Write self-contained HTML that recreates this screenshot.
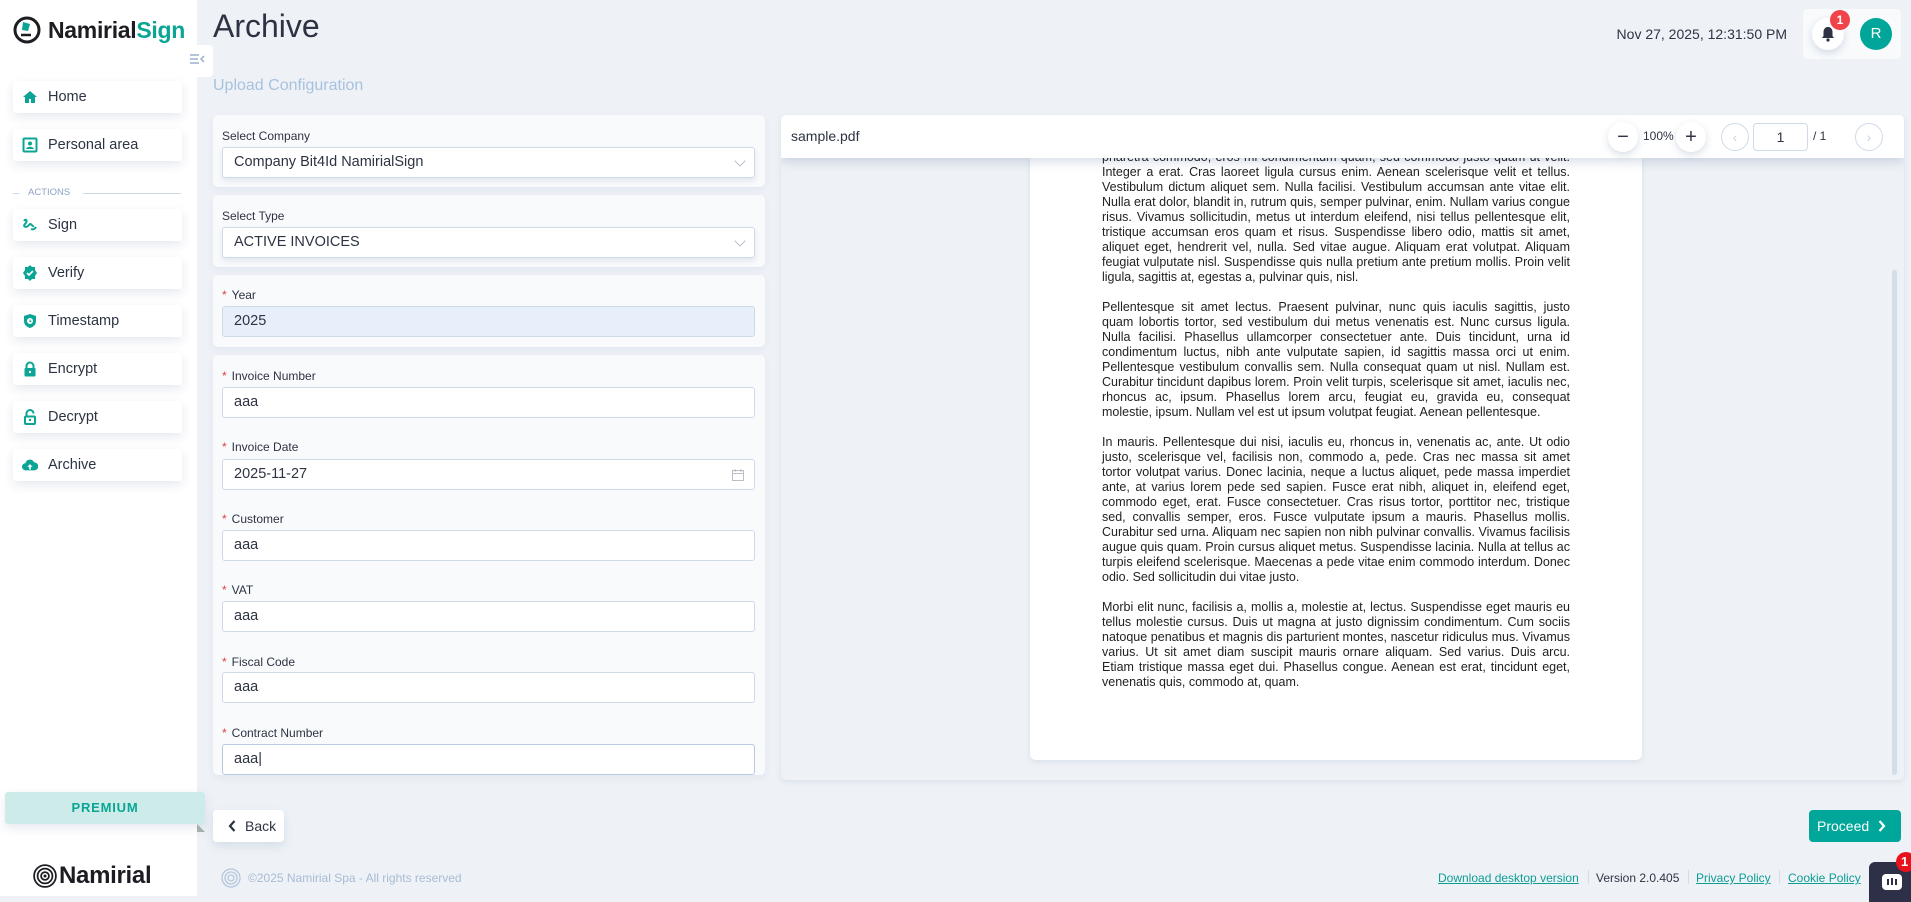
<!DOCTYPE html>
<html><head><meta charset="utf-8">
<style>
*{box-sizing:border-box;margin:0;padding:0}
body{width:1911px;height:896px;overflow:hidden;background:#eef2f7;font-family:"Liberation Sans",Arial,sans-serif;color:#2d3342;position:relative}
.abs{position:absolute}
#side{left:0;top:0;width:197px;height:896px;background:#fff}
.nav{position:absolute;left:13px;width:169px;height:32px;background:#fff;border-radius:3px;box-shadow:0 4px 10px rgba(40,70,120,.12);font-size:14.5px;display:flex;align-items:center;padding-left:9px;color:#2d3342}
.nav svg{width:16px;height:16px;margin-right:10px;flex:none}
.card{position:absolute;left:213px;width:552px;background:#f8fafc;border-radius:5px;box-shadow:0 3px 8px rgba(40,70,120,.06)}
.lbl{position:absolute;left:222px;font-size:12px;color:#2d3342}
.lbl i{color:#e53e3e;font-style:normal;margin-right:5px}
.inp{position:absolute;left:222px;width:533px;height:31px;background:#fff;border:1px solid #cfd9e8;border-radius:3px;font-size:14.5px;padding-left:11px;line-height:29px;color:#2d3342}
.chev{position:absolute;right:10px;top:9px;width:8px;height:8px;border-right:1px solid #b8bec8;border-bottom:1px solid #b8bec8;transform:rotate(45deg)}
.pdft{position:absolute;left:0;top:-8px;width:468px;font-size:12.5px;line-height:15px;text-align:justify;color:#222}
.pdft p{margin-bottom:15px}
.circ{position:absolute;width:30px;height:30px;border-radius:50%;background:#fff;box-shadow:0 3px 8px rgba(40,70,120,.18);display:flex;align-items:center;justify-content:center;font-size:20px;color:#2d3342}
.oc{position:absolute;width:28px;height:28px;border-radius:50%;border:1px solid #cfdbea;color:#c9d3df;font-size:14px;display:flex;align-items:center;justify-content:center}
.fl{position:absolute;top:871px;font-size:12px;color:#0d9d93;text-decoration:underline}
</style></head><body>

<div id="side" class="abs">
  <svg class="abs" style="left:13px;top:15px" width="28" height="30" viewBox="0 0 28 30"><circle cx="14" cy="15" r="12" fill="none" stroke="#1c1c22" stroke-width="3"/><path d="M10 7l7 2-2 7-6-1z" fill="#0aa595"/><path d="M8 20h10" stroke="#1c1c22" stroke-width="2.5"/></svg>
  <div class="abs" style="left:48px;top:17px;font-size:23px;font-weight:bold;letter-spacing:-.3px;color:#1c1c22">Namirial<span style="color:#0aa595">Sign</span></div>
  <div class="nav" style="top:81px"><svg viewBox="0 0 16 16"><path d="M8 2L1 8h2v6h4v-4h2v4h4V8h2z" fill="#0aa595"/></svg>Home</div>
  <div class="nav" style="top:129px"><svg viewBox="0 0 16 16"><rect x="1.5" y="1.5" width="13" height="13" rx="1" fill="none" stroke="#0aa595" stroke-width="2"/><circle cx="8" cy="6.5" r="2" fill="#0aa595"/><path d="M4 12c1-3 7-3 8 0z" fill="#0aa595"/></svg>Personal area</div>
  <div class="abs" style="left:13px;top:193px;width:6px;border-top:1px solid #cdd6e4"></div>
  <div class="abs" style="left:28px;top:187px;font-size:9.5px;color:#8ca3c4">ACTIONS</div>
  <div class="abs" style="left:83px;top:193px;width:98px;border-top:1px solid #cdd6e4"></div>
  <div class="nav" style="top:209px"><svg viewBox="0 0 16 16"><path d="M2 4c2-3 4 0 1 3s2 4 4 1 3 2 5 1M9 12c2 1 4 0 5-2" fill="none" stroke="#0aa595" stroke-width="2"/></svg>Sign</div>
  <div class="nav" style="top:257px"><svg viewBox="0 0 16 16"><path d="M8 0l2 2 3 0 0 3 2 3-2 3v3h-3l-2 2-2-2H3v-3L1 8l2-3V2h3z" fill="#0aa595"/><path d="M5 8l2 2 4-4" fill="none" stroke="#fff" stroke-width="1.6"/></svg>Verify</div>
  <div class="nav" style="top:305px"><svg viewBox="0 0 16 16"><path d="M8 1l6 2v5c0 4-3 6-6 7-3-1-6-3-6-7V3z" fill="#0aa595"/><circle cx="8" cy="8" r="3" fill="#fff"/><path d="M8 6.5v2h1.3" stroke="#0aa595" stroke-width="1" fill="none"/></svg>Timestamp</div>
  <div class="nav" style="top:353px"><svg viewBox="0 0 16 16"><path d="M4.5 7V5a3.5 3.5 0 017 0v2" fill="none" stroke="#0aa595" stroke-width="2"/><rect x="2.5" y="7" width="11" height="8.5" rx="1" fill="#0aa595"/><circle cx="8" cy="11" r="1.2" fill="#fff"/></svg>Encrypt</div>
  <div class="nav" style="top:401px"><svg viewBox="0 0 16 16"><path d="M4.5 7V4.5a3.5 3.5 0 017 0" fill="none" stroke="#0aa595" stroke-width="2"/><rect x="3" y="7.5" width="10" height="7.5" rx="1" fill="none" stroke="#0aa595" stroke-width="2"/><circle cx="8" cy="11" r="1.2" fill="#0aa595"/></svg>Decrypt</div>
  <div class="nav" style="top:449px"><svg viewBox="0 0 18 16"><path d="M4 14a4 4 0 010-8 5 5 0 019.5-1A4 4 0 0114 14z" fill="#0aa595"/><path d="M9 7l-3 3h2v3h2v-3h2z" fill="#fff"/></svg>Archive</div>
  <div class="abs" style="left:5px;top:792px;width:200px;height:32px;background:#cdece9;border-radius:3px;box-shadow:0 4px 10px rgba(40,70,120,.12);text-align:center;line-height:32px;font-size:13px;font-weight:bold;letter-spacing:.8px;color:#0aa595">PREMIUM</div>
  <div class="abs" style="left:197px;top:824px;width:0;height:0;border-left:8px solid #9fb0ad;border-bottom:8px solid transparent;transform:rotate(270deg)"></div>
  <svg class="abs" style="left:33px;top:864px" width="24" height="24" viewBox="0 0 22 22"><g fill="none" stroke="#1c1c22" stroke-width="1.6"><circle cx="11" cy="11" r="10"/><circle cx="11" cy="11" r="6.8"/><circle cx="11" cy="11" r="3.6"/></g><circle cx="11" cy="11" r="1.4" fill="#1c1c22"/></svg>
  <div class="abs" style="left:59px;top:862px;font-size:24px;font-weight:bold;color:#1c1c22;letter-spacing:-.3px">Namirial</div>
</div>
<div class="abs" style="left:190px;top:45px;width:23px;height:32px;background:#fff;border-radius:0 4px 4px 0"></div>
<svg class="abs" style="left:190px;top:54px" width="15" height="12" viewBox="0 0 15 12"><path d="M0 1h9M0 5h8M0 9h9M14 2l-3 3 3 3" fill="none" stroke="#9ab0cf" stroke-width="1.5"/></svg>

<div class="abs" style="left:213px;top:8px;font-size:32px;color:#2d3342">Archive</div>
<div class="abs" style="left:213px;top:77px;font-size:16px;color:#a8c1de">Upload Configuration</div>

<div class="abs" style="right:124px;top:26px;font-size:14px;color:#2d3342">Nov 27, 2025, 12:31:50 PM</div>
<div class="abs" style="left:1803px;top:9px;width:98px;height:50px;background:#f8fafc;border-radius:4px"></div>
<div class="circ" style="left:1812px;top:18px;width:32px;height:32px"><svg width="14" height="16" viewBox="0 0 14 16"><path d="M7 1c-3 0-4.5 2.5-4.5 5v4L1 12h12l-1.5-2V6C11.5 3.5 10 1 7 1z" fill="#2d3342"/><circle cx="7" cy="14" r="1.6" fill="#2d3342"/></svg></div>
<div class="abs" style="left:1830px;top:10px;width:20px;height:20px;border-radius:50%;background:#f0434a;color:#fff;font-size:12px;font-weight:bold;text-align:center;line-height:20px">1</div>
<div class="abs" style="left:1860px;top:18px;width:32px;height:32px;border-radius:50%;background:#00a699;color:#fff;font-size:15px;text-align:center;line-height:32px">R</div>

<div class="card" style="top:115px;height:72px"></div>
<div class="lbl" style="top:129px">Select Company</div>
<div class="inp" style="top:147px;box-shadow:0 3px 6px rgba(40,70,120,.1)">Company Bit4Id NamirialSign<div class="chev"></div></div>
<div class="card" style="top:195px;height:72px"></div>
<div class="lbl" style="top:209px">Select Type</div>
<div class="inp" style="top:227px;box-shadow:0 3px 6px rgba(40,70,120,.1)">ACTIVE INVOICES<div class="chev"></div></div>
<div class="card" style="top:275px;height:72px"></div>
<div class="lbl" style="top:288px"><i>*</i>Year</div>
<div class="inp" style="top:306px;background:#e7effb">2025</div>
<div class="card" style="top:355px;height:420px"></div>
<div class="lbl" style="top:369px"><i>*</i>Invoice Number</div>
<div class="inp" style="top:387px">aaa</div>
<div class="lbl" style="top:440px"><i>*</i>Invoice Date</div>
<div class="inp" style="top:459px">2025-11-27<svg class="abs" style="right:10px;top:9px" width="12" height="12" viewBox="0 0 12 12"><rect x=".5" y="1.5" width="11" height="10" fill="none" stroke="#b8bec8"/><path d="M.5 4.5h11M3 0v3M9 0v3" stroke="#b8bec8"/></svg></div>
<div class="lbl" style="top:512px"><i>*</i>Customer</div>
<div class="inp" style="top:530px">aaa</div>
<div class="lbl" style="top:583px"><i>*</i>VAT</div>
<div class="inp" style="top:601px">aaa</div>
<div class="lbl" style="top:655px"><i>*</i>Fiscal Code</div>
<div class="inp" style="top:672px">aaa</div>
<div class="lbl" style="top:726px"><i>*</i>Contract Number</div>
<div class="abs" style="left:213px;top:744px;width:552px;height:31px;overflow:hidden"><div class="inp" style="left:9px;top:0;border-color:#b9c9e2">aaa|</div></div>

<div class="abs" style="left:781px;top:115px;width:1123px;height:665px;background:#eef2f7;border-radius:5px;box-shadow:0 2px 6px rgba(40,70,120,.1);overflow:hidden">
  <div class="abs" style="left:249px;top:43px;width:612px;height:602px;background:#fff;border-radius:0 0 6px 6px;box-shadow:0 2px 6px rgba(40,70,120,.1);overflow:hidden">
    <div class="abs" style="left:72px;top:0;width:468px;height:600px">
      <div class="pdft">
<p>pharetra commodo, eros mi condimentum quam, sed commodo justo quam ut velit. Integer a erat. Cras laoreet ligula cursus enim. Aenean scelerisque velit et tellus. Vestibulum dictum aliquet sem. Nulla facilisi. Vestibulum accumsan ante vitae elit. Nulla erat dolor, blandit in, rutrum quis, semper pulvinar, enim. Nullam varius congue risus. Vivamus sollicitudin, metus ut interdum eleifend, nisi tellus pellentesque elit, tristique accumsan eros quam et risus. Suspendisse libero odio, mattis sit amet, aliquet eget, hendrerit vel, nulla. Sed vitae augue. Aliquam erat volutpat. Aliquam feugiat vulputate nisl. Suspendisse quis nulla pretium ante pretium mollis. Proin velit ligula, sagittis at, egestas a, pulvinar quis, nisl.</p>
<p>Pellentesque sit amet lectus. Praesent pulvinar, nunc quis iaculis sagittis, justo quam lobortis tortor, sed vestibulum dui metus venenatis est. Nunc cursus ligula. Nulla facilisi. Phasellus ullamcorper consectetuer ante. Duis tincidunt, urna id condimentum luctus, nibh ante vulputate sapien, id sagittis massa orci ut enim. Pellentesque vestibulum convallis sem. Nulla consequat quam ut nisl. Nullam est. Curabitur tincidunt dapibus lorem. Proin velit turpis, scelerisque sit amet, iaculis nec, rhoncus ac, ipsum. Phasellus lorem arcu, feugiat eu, gravida eu, consequat molestie, ipsum. Nullam vel est ut ipsum volutpat feugiat. Aenean pellentesque.</p>
<p>In mauris. Pellentesque dui nisi, iaculis eu, rhoncus in, venenatis ac, ante. Ut odio justo, scelerisque vel, facilisis non, commodo a, pede. Cras nec massa sit amet tortor volutpat varius. Donec lacinia, neque a luctus aliquet, pede massa imperdiet ante, at varius lorem pede sed sapien. Fusce erat nibh, aliquet in, eleifend eget, commodo eget, erat. Fusce consectetuer. Cras risus tortor, porttitor nec, tristique sed, convallis semper, eros. Fusce vulputate ipsum a mauris. Phasellus mollis. Curabitur sed urna. Aliquam nec sapien non nibh pulvinar convallis. Vivamus facilisis augue quis quam. Proin cursus aliquet metus. Suspendisse lacinia. Nulla at tellus ac turpis eleifend scelerisque. Maecenas a pede vitae enim commodo interdum. Donec odio. Sed sollicitudin dui vitae justo.</p>
<p>Morbi elit nunc, facilisis a, mollis a, molestie at, lectus. Suspendisse eget mauris eu tellus molestie cursus. Duis ut magna at justo dignissim condimentum. Cum sociis natoque penatibus et magnis dis parturient montes, nascetur ridiculus mus. Vivamus varius. Ut sit amet diam suscipit mauris ornare aliquam. Sed varius. Duis arcu. Etiam tristique massa eget dui. Phasellus congue. Aenean est erat, tincidunt eget, venenatis quis, commodo at, quam.</p>
      </div>
    </div>
  </div>
  <div class="abs" style="left:1111px;top:155px;width:5px;height:505px;background:#d5dde9;border-radius:3px"></div>
  <div class="abs" style="left:0;top:0;width:1123px;height:43px;background:#fff;box-shadow:0 4px 10px rgba(40,70,120,.18)">
    <div class="abs" style="left:10px;top:13px;font-size:14px;color:#2d3342">sample.pdf</div>
    <div class="circ" style="left:827px;top:7px">&#8722;</div>
    <div class="abs" style="left:862px;top:14px;font-size:12px;color:#2d3342">100%</div>
    <div class="circ" style="left:895px;top:7px">+</div>
    <div class="oc" style="left:940px;top:8px">&#8249;</div>
    <div class="abs" style="left:972px;top:8px;width:55px;height:28px;border:1px solid #cfdbea;border-radius:4px;text-align:center;line-height:26px;font-size:14px">1</div>
    <div class="abs" style="left:1032px;top:14px;font-size:12px;color:#2d3342">/ 1</div>
    <div class="oc" style="left:1074px;top:8px">&#8250;</div>
  </div>
</div>

<div class="abs" style="left:213px;top:810px;width:71px;height:32px;background:#fff;border-radius:4px;box-shadow:0 4px 10px rgba(40,70,120,.12);font-size:14px;line-height:32px;padding-left:32px;color:#2d3342">Back</div>
<svg class="abs" style="left:228px;top:820px" width="8" height="12" viewBox="0 0 8 12"><path d="M6.5 1L2 6l4.5 5" fill="none" stroke="#2d3342" stroke-width="2.2"/></svg>
<div class="abs" style="left:1809px;top:810px;width:92px;height:32px;background:#00a699;border-radius:4px;font-size:14px;line-height:32px;padding-left:8px;color:#fff">Proceed</div>
<svg class="abs" style="left:1878px;top:820px" width="8" height="12" viewBox="0 0 8 12"><path d="M1.5 1L6 6l-4.5 5" fill="none" stroke="#fff" stroke-width="2.2"/></svg>

<svg class="abs" style="left:221px;top:868px" width="20" height="20" viewBox="0 0 20 20"><g fill="none" stroke="#b5c6dc" stroke-width="1.3"><circle cx="10" cy="10" r="9"/><circle cx="10" cy="10" r="6"/><circle cx="10" cy="10" r="3"/></g></svg>
<div class="abs" style="left:248px;top:871px;font-size:12px;color:#a8bbd4">©2025 Namirial Spa - All rights reserved</div>
<div class="fl" style="left:1438px">Download desktop version</div>
<div class="abs" style="left:1588px;top:870px;height:14px;border-left:1px solid #d5dde9"></div>
<div class="abs" style="left:1596px;top:871px;font-size:12px;color:#2d3342">Version 2.0.405</div>
<div class="abs" style="left:1688px;top:870px;height:14px;border-left:1px solid #d5dde9"></div>
<div class="fl" style="left:1696px">Privacy Policy</div>
<div class="abs" style="left:1779px;top:870px;height:14px;border-left:1px solid #d5dde9"></div>
<div class="fl" style="left:1788px">Cookie Policy</div>
<div class="abs" style="left:1869px;top:862px;width:50px;height:40px;background:#2d3047;border-radius:6px 0 0 0"></div>
<svg class="abs" style="left:1881px;top:873px" width="22" height="20" viewBox="0 0 22 20"><rect x="1" y="1" width="20" height="16" rx="4" fill="#fff"/><path d="M7 6v6M11 5v7M15 6v6" stroke="#2d3047" stroke-width="2"/></svg>
<div class="abs" style="left:1896px;top:852px;width:20px;height:20px;border-radius:50%;background:#e8121c;color:#fff;font-size:13px;font-weight:bold;line-height:20px;padding-left:5px">1</div>
</body></html>
